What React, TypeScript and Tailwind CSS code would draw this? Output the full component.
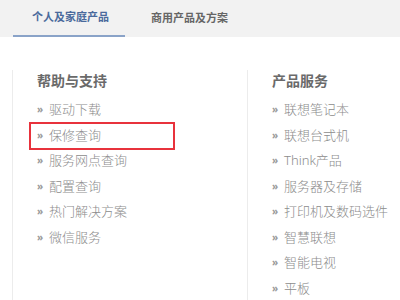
import React from 'react';

const HELP = ['驱动下载', '保修查询', '服务网点查询', '配置查询', '热门解决方案', '微信服务'];
const PRODUCTS = ['联想笔记本', '联想台式机', 'Think产品', '服务器及存储', '打印机及数码选件', '智慧联想', '智能电视', '平板'];

function Column({ title, items, highlight }: { title: string; items: string[]; highlight?: number }) {
  return (
    <div className="relative flex flex-col border-l border-[#ececec] pl-[24px]">
      <div className="h-[22px] text-[14px] font-bold leading-[22px] text-[#6a6a6a]">{title}</div>
      <ul className="mt-[5px]">
        {items.map((item, i) => (
          <li key={item} className="relative flex h-[25.5px] items-center text-[13px] font-light text-[#8c8c8c]">
            <span className="mr-[6px] w-[6px] text-[10px] font-bold text-[#999]">»</span>
            <span>{item}</span>
            {i === highlight && (
              <div className="absolute left-[-8px] top-[-1px] h-[28px] w-[146px] border-2 border-[#e8323c]" />
            )}
          </li>
        ))}
      </ul>
    </div>
  );
}

export default function App() {
  return (
    <div
      className="h-[300px] w-[400px] overflow-hidden bg-white"
      style={{ fontFamily: '"Noto Sans", "Noto Sans CJK SC", sans-serif' }}
    >
      <div className="flex h-[37px] bg-[#f2f2f2] pl-[13px]">
        <div className="flex w-[112px] items-center justify-center border-b-2 border-[#8aa3c8] pl-[3px] text-[11px] font-bold text-[#4a6a9c]">
          个人及家庭产品
        </div>
        <div className="ml-[26px] flex items-center text-[11px] font-bold text-[#666]">商用产品及方案</div>
      </div>
      <div className="mt-[33px] grid h-[300px] grid-cols-[235px_1fr] pl-[12px]">
        <Column title="帮助与支持" items={HELP} highlight={1} />
        <Column title="产品服务" items={PRODUCTS} />
      </div>
    </div>
  );
}
